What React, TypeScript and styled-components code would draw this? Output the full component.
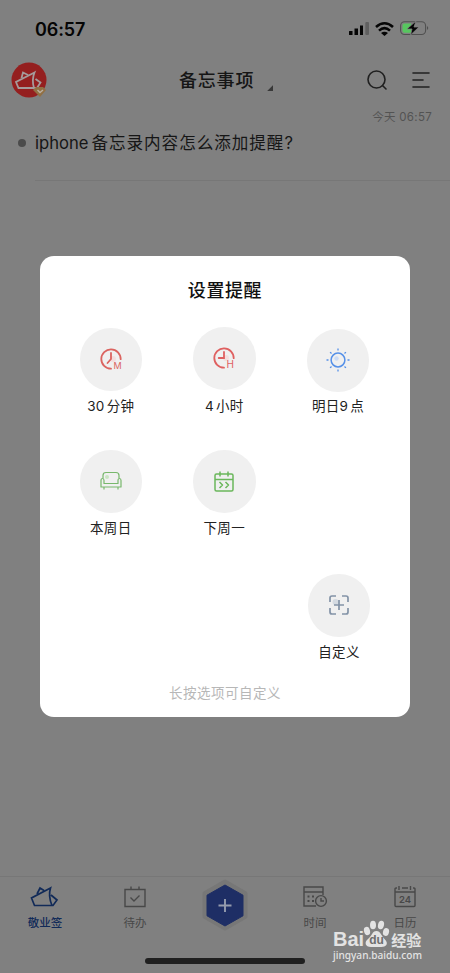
import React from "react";
import styled, { createGlobalStyle } from "styled-components";

const GlobalStyle = createGlobalStyle`
  * { box-sizing: border-box; }
  body { margin: 0; background: #808080; overflow: hidden; }
`;

const Screen = styled.main`
  position: relative;
  width: 450px;
  height: 973px;
  display: flex;
  flex-direction: column;
  overflow: hidden;
  background: #808080;
  color: #161616;
  font-family: Inter, "Noto Sans CJK SC", sans-serif;
  white-space: nowrap;
`;

const StatusBar = styled.div`
  height: 56px;
  padding: 3px 21px 0 35px;
  display: flex;
  align-items: center;
  justify-content: space-between;
`;

const Clock = styled.span`
  font: 600 18px/24px Inter, sans-serif;
  letter-spacing: -0.1px;
  color: #050505;
`;

const StatusIcons = styled.div`
  display: flex;
  align-items: center;
  gap: 6px;
  margin-top: -2px;
`;

const Icon = styled.svg`
  display: block;
  flex: none;
  overflow: visible;
  fill: none;
  stroke: currentColor;
`;

const Header = styled.header`
  height: 48px;
  padding: 0 20px 0 11px;
  display: grid;
  grid-template-columns: 168px 1fr auto;
  align-items: center;
`;

const Title = styled.h1`
  margin: 2px 0 0;
  display: flex;
  align-items: center;
  gap: 12px;
  font-size: 18px;
  font-weight: 500;
  line-height: 26px;
  letter-spacing: 0.8px;
`;

const Corner = styled.i`
  width: 6px;
  height: 6px;
  margin: 14px 0 0 1px;
  background: #383838;
  clip-path: polygon(100% 0, 100% 100%, 0 100%);
`;

const HeaderActions = styled.div`
  display: flex;
  align-items: center;
  gap: 25px;
  color: #202020;
`;

const NoteDate = styled.time`
  height: 24px;
  padding-right: 18px;
  text-align: right;
  font-size: 11.5px;
  line-height: 27px;
  letter-spacing: 0.3px;
  color: #535353;
`;

const Note = styled.article`
  height: 53px;
  padding-left: 18px;
  display: flex;
  align-items: flex-start;
  gap: 9px;
`;

const Bullet = styled.i`
  width: 8px;
  height: 8px;
  margin-top: 11px;
  border-radius: 50%;
  background: #4b4b4b;
`;

const NoteBody = styled.div`
  flex: 1;
  height: 53px;
  border-bottom: 1px solid #777;
  font-size: 16.6px;
  line-height: 31px;
  span { letter-spacing: 0.95px; margin-left: 3px; }
`;

const Spacer = styled.div`
  flex: 1;
`;

const TabBar = styled.nav`
  height: 97px;
  display: grid;
  grid-template-columns: repeat(5, 90px);
  border-top: 1px solid #777;
`;

const Tab = styled.div<{ $active?: boolean }>`
  padding-top: 8px;
  display: flex;
  flex-direction: column;
  align-items: center;
  gap: 3px;
  font-size: 11.5px;
  line-height: 18px;
  font-weight: ${(p) => (p.$active ? 500 : 400)};
  color: ${(p) => (p.$active ? "#112a58" : "#484848")};
`;

const AddTab = styled.div`
  padding-top: 1px;
  display: flex;
  justify-content: center;
`;

const HomeIndicator = styled.div`
  position: absolute;
  left: 145px;
  bottom: 9px;
  width: 160px;
  height: 6px;
  border-radius: 3px;
  background: #202020;
`;

const Overlay = styled.div`
  position: absolute;
  inset: 256px 40px auto;
`;

const Dialog = styled.section`
  height: 461px;
  padding: 21px 14px 0;
  display: flex;
  flex-direction: column;
  border-radius: 14px;
  background: #fff;
`;

const DialogTitle = styled.h2`
  margin: 0 0 22px;
  text-align: center;
  font-size: 18px;
  line-height: 28px;
  font-weight: 500;
  letter-spacing: 0.6px;
  color: #111;
`;

const Options = styled.div`
  display: grid;
  grid-template-columns: 113.5px 113.5px 114px;
  grid-template-rows: 122px 124px 109px;
`;

const Option = styled.div<{ $top?: number; $last?: boolean }>`
  display: flex;
  flex-direction: column;
  align-items: center;
  grid-column: ${(p) => (p.$last ? 3 : "auto")};
  grid-row: ${(p) => (p.$last ? 3 : "auto")};
  padding-top: ${(p) => p.$top ?? 1}px;
  padding-left: ${(p) => (p.$last ? 2 : 0)}px;
`;

const Disc = styled.div<{ $color: string; $gap?: number }>`
  width: 62.5px;
  height: 62.5px;
  margin-bottom: ${(p) => p.$gap ?? 5.5}px;
  display: grid;
  place-items: center;
  border-radius: 50%;
  background: #f0f0f0;
  color: ${(p) => p.$color};
`;

const Label = styled.div`
  font-size: 13.5px;
  line-height: 20px;
  letter-spacing: 0.3px;
  color: #222;
  b { font-weight: 400; margin-right: 2px; }
`;

const Hint = styled.p`
  margin: 0;
  text-align: center;
  font-size: 13.5px;
  line-height: 22px;
  letter-spacing: 0.5px;
  color: #b7b7b7;
`;

const Watermark = styled.div`
  position: absolute;
  left: 333px;
  top: 919px;
  width: 92px;
  color: #e3e3e3;
`;

const Brand = styled.div`
  height: 29px;
  display: flex;
  align-items: flex-end;
  font: 700 20px/18px "Liberation Sans", sans-serif;
  svg { margin: 0 1px 0 -1px; }
`;

const BrandChinese = styled.span`
  font: 700 15px/16px "Noto Sans CJK SC", sans-serif;
`;

const Domain = styled.div`
  font: 500 10.1px/15px "Noto Sans", sans-serif;
`;

function Avatar() {
  return (
    <Icon width="36" height="36" viewBox="0 0 36 36">
      <circle cx="18" cy="18" r="17.5" fill="#941f1f" stroke="none" />
      <path d="m10.5 16 1.5-5.5 5 2.5M23.5 10.5 5 20l2.5 6h15.5Q20.5 18 23.5 10.5Zm1 6.5 5 3.5-3.5 5.5h-3" stroke="#a59b9b" strokeWidth="1.8" />
      <path d="m25 25-3 3 7 7 6-7-3-3Z" fill="#927043" stroke="none" />
      <path d="m26.5 28 2.5 2.5 3-2.5" stroke="#bbb0a2" strokeWidth="1.4" />
    </Icon>
  );
}

function ClockIcon({ unit }: { unit: "M" | "H" }) {
  const minute = unit === "M";
  return (
    <Icon width="24" height="24" viewBox="0 0 24 24" strokeWidth="1.8" strokeLinecap="round">
      <circle cx="14" cy="12" r="3" fill="#f3dddd" stroke="none" />
      <path d="M21.7 12.2A9.7 9.7 0 1 0 12 21.7" />
      <path d={minute ? "M12 6v6l-3.5 4" : "M12 6v6H6.7"} />
      <text x="14.5" y="22" fill="currentColor" stroke="none" fontFamily="Inter" fontSize={minute ? 9 : 10} fontWeight="400">{unit}</text>
    </Icon>
  );
}

function SunIcon() {
  return (
    <Icon width="24" height="24" viewBox="0 0 24 24" strokeWidth="1.5">
      <circle cx="10.5" cy="10.5" r="2.2" fill="#cbdcf7" stroke="none" />
      <circle cx="12" cy="12" r="6.9" />
      <path d="M12 .5v2M12 21.5v2M.5 12h2M21.5 12h2M4.1 4.1l1.4 1.4M18.5 18.5l1.4 1.4M19.9 4.1l-1.4 1.4M5.5 18.5l-1.4 1.4" strokeWidth="1.3" />
    </Icon>
  );
}

function SofaIcon() {
  return (
    <Icon width="22" height="20" viewBox="0 0 22 20" strokeWidth="1.2" strokeLinejoin="round">
      <circle cx="7" cy="6" r="2" fill="#c9e4c2" stroke="none" />
      <path d="M3 8V4.5Q3 1.5 6 1.5h10q3 0 3 3V8M1 9.5Q1 7.5 2.5 7.5T4 9.5V12.5h14V9.5Q18 7.5 19.5 7.5T21 9.5V16H1Zm3 6.5v2.5M18 16v2.5" />
    </Icon>
  );
}

function NextWeekIcon() {
  return (
    <Icon width="20" height="21" viewBox="0 0 20 21" strokeWidth="1.5" strokeLinejoin="round">
      <rect x="1" y="3" width="18" height="17" rx="1.5" />
      <path d="M1 8.5h18M6 .5v5M14 .5v5M5.5 11 8.5 14l-3 3M11.5 11l3 3-3 3" />
    </Icon>
  );
}

function CustomIcon() {
  return (
    <Icon width="20" height="20" viewBox="0 0 20 20" strokeWidth="1.7">
      <circle cx="6.5" cy="7" r="3" fill="#d5dbe2" stroke="none" />
      <path d="M1 7V3q0-2 2-2h4M13 1h4q2 0 2 2v4M19 13v4q0 2-2 2h-4M7 19H3q-2 0-2-2v-4M10 5v10M5 10h10" />
    </Icon>
  );
}

export default function App() {
  return (
    <Screen>
      <GlobalStyle />
      <StatusBar>
        <Clock>06:57</Clock>
        <StatusIcons>
          <Icon width="20" height="14" viewBox="0 0 20 14">
            <path d="M0 9.5q0-.5.5-.5h3v4h-3q-.5 0-.5-.5ZM5.5 6.5H9V13H5.5ZM11 3.5h3V13h-3Z" fill="#050505" stroke="none" />
            <rect x="16.3" y="0" width="3.7" height="13" rx="1" fill="#606060" stroke="none" />
          </Icon>
          <Icon width="19" height="14" viewBox="0 0 19 14">
            <path d="M1 5q8.5-7.5 17 0M4 8.6q5.5-5 11 0" stroke="#050505" strokeWidth="2.6" />
            <path d="M6 11q3.5-2.6 7 0L9.5 14Z" fill="#050505" stroke="none" />
          </Icon>
          <Icon width="29" height="15" viewBox="0 0 29 15">
            <rect x=".6" y=".8" width="25" height="12.7" rx="4" stroke="#505050" strokeWidth="1.1" />
            <path d="M4.5 2.5H11v9.3H4.5q-2 0-2-2V4.5q0-2 2-2Z" fill="#57c65f" stroke="none" />
            <path d="M16 0 7 8h5l-1.5 6L19 6h-5Z" fill="#050505" stroke="#808080" strokeWidth=".8" />
            <path d="M27 5q2.5 2 0 4Z" fill="#505050" stroke="none" />
          </Icon>
        </StatusIcons>
      </StatusBar>
      <Header>
        <Avatar />
        <Title>备忘事项<Corner /></Title>
        <HeaderActions>
          <Icon width="20" height="20" viewBox="0 0 20 20" strokeWidth="1.6" strokeLinecap="round">
            <circle cx="9.5" cy="9.5" r="8.5" /><path d="m15.5 15.5 3.5 3.5" />
          </Icon>
          <Icon width="18" height="18" viewBox="0 0 18 18" strokeWidth="1.6" strokeLinecap="round">
            <path d="M1 2h16M1 9h10M1 16h16" />
          </Icon>
        </HeaderActions>
      </Header>
      <NoteDate>今天 06:57</NoteDate>
      <Note><Bullet /><NoteBody>iphone<span>备忘录内容怎么添加提醒?</span></NoteBody></Note>
      <Spacer />
      <TabBar>
        <Tab $active>
          <Icon width="28" height="26" viewBox="0 0 28 26" strokeWidth="1.7">
            <path d="m6 9 3-6 4 2.5M19.5 3 .5 13l3 7.5H21Q17 11 19.5 3Zm.5 7 6 5-4 5.5h-3" />
          </Icon>
          敬业签
        </Tab>
        <Tab>
          <Icon width="22" height="26" viewBox="0 0 22 26" strokeWidth="1.4">
            <path d="M1 4.5h20v17H1ZM7 1.5v3M15 1.5v3M6.5 12.5l3.5 3.5 5.5-5.5" />
          </Icon>
          待办
        </Tab>
        <AddTab>
          <Icon width="48" height="54" viewBox="0 0 48 54">
            <path d="m24 3.5 20.5 11.8v23.4L24 50.5 3.5 38.7V15.3Z" fill="#777" stroke="#777" strokeWidth="4" strokeLinejoin="round" />
            <path d="m24 7 18 10.2v20.6L24 48 6 37.8V17.2Z" fill="#1e2e65" stroke="#1e2e65" strokeWidth="1" strokeLinejoin="round" />
            <path d="M24 21v13M17.5 27.5h13" stroke="#969cae" strokeWidth="1.9" />
          </Icon>
        </AddTab>
        <Tab>
          <Icon width="24" height="26" viewBox="0 0 24 26" strokeWidth="1.4">
            <path d="M13 21H1V2h19v8M1 7h19" />
            <path d="M4.5 11.5h2m2.5 0h2M4.5 16h2m2.5 0h2" strokeWidth="2" />
            <circle cx="18" cy="16" r="5.4" /><path d="M18 13v3h3" />
          </Icon>
          时间
        </Tab>
        <Tab>
          <Icon width="22" height="26" viewBox="0 0 22 26" strokeWidth="1.4">
            <path d="M3 3H2q-1 0-1 1v16.5q0 1 1 1h18q1 0 1-1V4q0-1-1-1h-1M8 3h6M5 1v4M16.5 1v4M1 7h20" />
            <text x="11" y="18" textAnchor="middle" fill="currentColor" stroke="none" fontFamily="Inter" fontWeight="600" fontSize="9.5">24</text>
          </Icon>
          日历
        </Tab>
      </TabBar>
      <HomeIndicator />
      <Overlay>
        <Dialog>
          <DialogTitle>设置提醒</DialogTitle>
          <Options>
            <Option><Disc $color="#db6460"><ClockIcon unit="M" /></Disc><Label><b>30</b>分钟</Label></Option>
            <Option $top={0}><Disc $color="#df6060" $gap={6.5}><ClockIcon unit="H" /></Disc><Label><b>4</b>小时</Label></Option>
            <Option $top={2}><Disc $color="#5590e8" $gap={4.5}><SunIcon /></Disc><Label>明日<b>9</b>点</Label></Option>
            <Option><Disc $color="#78b86c"><SofaIcon /></Disc><Label>本周日</Label></Option>
            <Option><Disc $color="#6ab75b"><NextWeekIcon /></Disc><Label>下周一</Label></Option>
            <Option $last><Disc $color="#8393a7"><CustomIcon /></Disc><Label>自定义</Label></Option>
          </Options>
          <Hint>长按选项可自定义</Hint>
        </Dialog>
      </Overlay>
      <Watermark>
        <Brand>
          <span>Bai</span>
          <Icon width="27" height="29" viewBox="0 0 27 29">
            <g fill="currentColor" stroke="none">
              <ellipse cx="4" cy="12" rx="3" ry="4.2" transform="rotate(-15 4 12)" />
              <ellipse cx="10" cy="6" rx="3" ry="4.3" />
              <ellipse cx="18" cy="6" rx="3" ry="4.3" transform="rotate(12 18 6)" />
              <ellipse cx="23" cy="13" rx="3" ry="4" transform="rotate(15 23 13)" />
              <path d="M13.5 12c4 0 5 5 8 8 5 5 1 8-3 8H8c-6 0-7-5-3-8s4-8 8.5-8Z" />
            </g>
            <text x="13.5" y="25" textAnchor="middle" fill="#6e6e6e" stroke="none" fontFamily="Liberation Sans" fontSize="12" fontWeight="700">du</text>
          </Icon>
          <BrandChinese>经验</BrandChinese>
        </Brand>
        <Domain>jingyan.baidu.com</Domain>
      </Watermark>
    </Screen>
  );
}
